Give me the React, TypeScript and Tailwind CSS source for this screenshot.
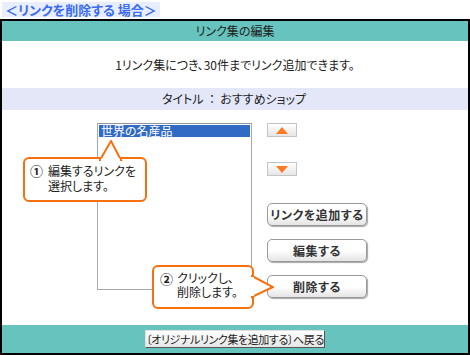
import React from "react";

const font = "font-['Noto_Sans_CJK_JP','Noto_Sans',sans-serif]";

function ArrowBtn({ up }: { up?: boolean }) {
  return (
    <div className="w-[30px] h-[14px] border border-[#c4c4c4] bg-gradient-to-b from-white to-[#e6e6e6] flex items-center justify-center">
      <svg width="12" height="7" viewBox="0 0 12 7">
        {up ? (
          <polygon points="6,0 12,7 0,7" fill="#ff7a21" />
        ) : (
          <polygon points="0,0 12,0 6,7" fill="#ff7a21" />
        )}
      </svg>
    </div>
  );
}

function BigBtn({ label }: { label: string }) {
  return (
    <div className="w-[100px] h-[23px] rounded-[5px] border border-[#9a9a9a] bg-gradient-to-b from-white via-white to-[#e4e4e4] shadow-[1px_1px_1px_rgba(0,0,0,0.35)] flex items-center justify-center text-[12px] font-bold text-[#333] tracking-[0.5px] whitespace-nowrap">
      {label}
    </div>
  );
}

export default function App() {
  return (
    <div className={`w-[470px] h-[355px] bg-white ${font} text-[#222] [font-feature-settings:'palt']`}>
      <div className="h-[19px] pl-[2px] pt-[2px] flex items-start">
        <div className="flex items-center h-[15px] bg-[#e8eeff] text-[#3a6cf0] font-bold text-[13px] leading-[13px] px-[3px] whitespace-nowrap">
          ＜リンクを削除する 場合＞
        </div>
      </div>
      <div className="border-2 border-black h-[336px] flex flex-col">
        <div className="h-[20px] bg-[#66c3bd] flex items-center justify-center text-[12px]">
          リンク集の編集
        </div>
        <div className="h-[47px] flex items-center justify-center text-[12px]">
          1リンク集につき、30件までリンク追加できます。
        </div>
        <div className="h-[22px] bg-[#e3e7f8] flex items-center justify-center text-[12px] pr-[2px] whitespace-pre">
          {"タイトル  ：  おすすめショップ"}
        </div>
        <div className="h-[215px] relative flex pl-[95px] pt-[13px]">
          <div className="w-[155px] h-[167px] border border-[#a3aab6] border-t-[#8e95a2] p-[1px] bg-white">
            <div className="h-[12px] bg-[#316ac5] text-white text-[12px] leading-[12px] pl-[2px]">
              世界の名産品
            </div>
          </div>
          <div className="ml-[15px] flex flex-col">
            <ArrowBtn up />
            <div className="mt-[25px]">
              <ArrowBtn />
            </div>
            <div className="mt-[27px] flex flex-col gap-[13px]">
              <BigBtn label="リンクを追加する" />
              <BigBtn label="編集する" />
              <BigBtn label="削除する" />
            </div>
          </div>

          {/* callout 1 */}
          <div className="absolute left-[21px] top-[47px] w-[124px] h-[45px] border-2 border-[#f7700f] rounded-[6px] bg-white pl-[5px] pt-[4px] text-[12px] leading-[15px]">
            <svg className="absolute left-[74px] top-[-19px]" width="24" height="21" viewBox="0 0 24 21">
              <polygon points="1,20 12,1 22,20" fill="white" stroke="#f7700f" strokeWidth="2" strokeLinejoin="miter" />
              <rect x="2" y="18.5" width="19" height="3" fill="white" />
            </svg>
            <div className="relative flex items-center h-[15px]">
              <span className="font-bold text-[13px] leading-[13px] w-[18px]">①</span>
              <span>編集するリンクを</span>
            </div>
            <div className="relative pl-[18px] h-[15px]">選択します。</div>
          </div>

          {/* callout 2 */}
          <div className="absolute left-[150px] top-[155px] w-[102px] h-[44px] border-2 border-[#f7700f] rounded-[6px] bg-white pl-[6px] pt-[4px] text-[12px] leading-[14px]">
            <svg className="absolute right-[-22px] top-[8px]" width="23" height="24" viewBox="0 0 23 24">
              <polygon points="1,1 22,12 1,22" fill="white" stroke="#f7700f" strokeWidth="2" />
              <rect x="0" y="2" width="3" height="19" fill="white" />
            </svg>
            <div className="relative flex items-center h-[14px]">
              <span className="font-bold text-[13px] leading-[13px] w-[17px]">②</span>
              <span>クリックし、</span>
            </div>
            <div className="relative pl-[17px] h-[14px]">削除します。</div>
          </div>
        </div>
        <div className="h-[28px] bg-[#66c3bd] flex justify-center pt-[5px]">
          <div className="w-[180px] h-[18px] bg-gradient-to-b from-white to-[#e6e6e6] border border-t-[#e0e0e0] border-l-[#e0e0e0] border-r-[#555] border-b-[#555] flex items-center justify-center text-[11px] text-[#222] whitespace-nowrap tracking-[-0.4px]">
            〔オリジナルリンク集を追加する〕へ戻る
          </div>
        </div>
      </div>
    </div>
  );
}
